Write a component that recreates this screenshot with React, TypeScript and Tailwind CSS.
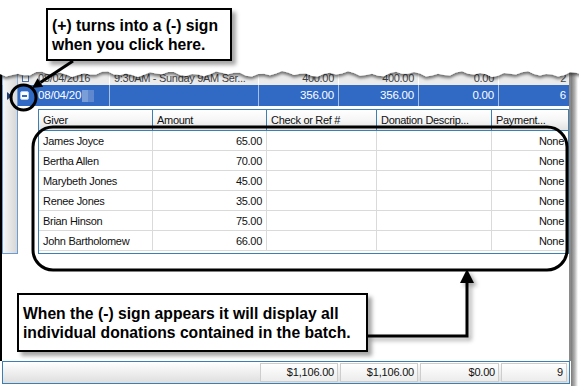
import React from "react";

const gridRows: [string, string][] = [
  ["James Joyce", "65.00"],
  ["Bertha Allen", "70.00"],
  ["Marybeth Jones", "45.00"],
  ["Renee Jones", "35.00"],
  ["Brian Hinson", "75.00"],
  ["John Bartholomew", "66.00"],
];

function RowHeaderCol() {
  return (
    <div className="w-[16px] flex flex-col shrink-0">
      <div className="h-[15px] border-x border-[#8fb1d8] bg-gradient-to-r from-[#f6f6f6] to-[#dadada]" />
      <div className="h-[21px] border-x border-[#6b9bd1] bg-gradient-to-r from-[#f6f6f6] to-[#dadada] flex items-center pl-[4px]">
        <svg width="5" height="8" viewBox="0 0 5 8">
          <polygon points="0,0 5,4 0,8" fill="#1f3f7a" />
        </svg>
      </div>
      <div className="h-[148px] border-x border-b border-[#6b9bd1] bg-gradient-to-r from-[#f6f6f6] to-[#d6d6d6]" />
    </div>
  );
}

function TornRow() {
  return (
    <div className="h-[15px] flex bg-[#ebebeb] text-[#444] text-[11px] tracking-[-0.3px] leading-[13px]">
      <div className="w-[92px] border-r border-white flex items-end pl-[4px] gap-[9px]">
        <div className="w-[7px] h-[7px] mb-[3px] border border-[#4a6fa5] bg-white" />
        <span>08/04/2016</span>
      </div>
      <div className="w-[149px] border-r border-white flex items-end pl-[4px]">
        <span className="whitespace-nowrap overflow-hidden">9:30AM - Sunday 9AM Ser...</span>
      </div>
      <div className="w-[80px] border-r border-white flex items-end justify-end pr-[4px]">400.00</div>
      <div className="w-[80px] border-r border-white flex items-end justify-end pr-[4px]">400.00</div>
      <div className="w-[80px] border-r border-white flex items-end justify-end pr-[4px]">0.00</div>
      <div className="w-[70px] flex items-end justify-end pr-[3px]">2</div>
    </div>
  );
}

function SelectedRow() {
  return (
    <div className="h-[21px] flex bg-[#316ac5] text-white text-[11.5px] tracking-[-0.2px] items-stretch">
      <div className="w-[92px] border-r border-[#a9c0e6] flex items-center pl-[2px]">
        <div className="w-[9px] h-[9px] rounded-[2px] bg-white border border-[#b8cdee] flex items-center justify-center">
          <div className="w-[5px] h-[2px] bg-[#316ac5]" />
        </div>
        <span className="ml-[9px]">08/04/20</span>
        <div className="ml-[1px] flex">
          <div className="w-[6px] h-[12px] bg-[#7a9fd8]" />
          <div className="w-[6px] h-[12px] bg-[#5f88cf]" />
        </div>
      </div>
      <div className="w-[149px] border-r border-[#a9c0e6]" />
      <div className="w-[80px] border-r border-[#a9c0e6] flex items-center justify-end pr-[4px]">356.00</div>
      <div className="w-[80px] border-r border-[#a9c0e6] flex items-center justify-end pr-[4px]">356.00</div>
      <div className="w-[80px] border-r border-[#a9c0e6] flex items-center justify-end pr-[4px]">0.00</div>
      <div className="w-[70px] flex items-center justify-end pr-[3px]">6</div>
    </div>
  );
}

function DetailGrid() {
  const hdr = "border-r border-[#3c7fb1] flex items-center pl-[4px] whitespace-nowrap";
  const cell = "border-r border-[#dadada] flex items-center pt-[1px]";
  return (
    <div className="w-[531px] border border-[#3c7fb1] flex flex-col text-[11px] tracking-[-0.3px] text-[#111]">
      <div className="h-[21px] flex border-b border-[#3c7fb1] bg-gradient-to-b from-white via-[#f6f6f6] to-[#e2e2e2]">
        <div className={`w-[114px] ${hdr}`}>Giver</div>
        <div className={`w-[114px] ${hdr}`}>Amount</div>
        <div className={`w-[110px] ${hdr}`}>Check or Ref #</div>
        <div className={`w-[115px] ${hdr}`}>Donation Descrip...</div>
        <div className="w-[76px] flex items-center pl-[4px]">Payment...</div>
      </div>
      {gridRows.map(([name, amt]) => (
        <div key={name} className="h-[20px] flex border-b border-[#dadada] bg-white">
          <div className={`w-[114px] ${cell} pl-[4px]`}>{name}</div>
          <div className={`w-[114px] ${cell} justify-end pr-[4px]`}>{amt}</div>
          <div className={`w-[110px] ${cell}`} />
          <div className={`w-[115px] ${cell}`} />
          <div className="w-[76px] flex items-center justify-end pr-[4px] pt-[1px]">None</div>
        </div>
      ))}
    </div>
  );
}

function Footer() {
  const c =
    "h-[19px] border border-[#cdcdcd] bg-gradient-to-b from-white to-[#ececec] flex items-center justify-end pr-[3px]";
  return (
    <div className="ml-[2px] w-[568px] h-[23px] border border-[#3c7fb1] bg-gradient-to-b from-white to-[#dedede] flex items-center justify-end pr-[2px] gap-[2px] text-[11px] tracking-[-0.2px] text-[#111]">
      <div className={`w-[78px] ${c}`}>$1,106.00</div>
      <div className={`w-[78px] ${c}`}>$1,106.00</div>
      <div className={`w-[79px] ${c}`}>$0.00</div>
      <div className={`w-[66px] ${c}`}>9</div>
    </div>
  );
}

export default function App() {
  const jag = Array.from({ length: 100 }, (_, i) => {
    const x = i * 6;
    const y = 14 + Math.sin(i * 1.7) * 1.6 + Math.sin(i * 0.63) * 1.4;
    return `${x},${y.toFixed(1)}`;
  }).join(" ");

  return (
    <div className="relative w-[579px] h-[386px] overflow-hidden bg-white font-['Liberation_Sans',Arial,sans-serif]">
      <div className="flex flex-col">
        <div className="h-[70px]" />
        <div className="flex h-[316px]">
          <div className="w-[571px] flex flex-col">
            <div className="h-[291px] flex flex-col border-l-2 border-black border-r-2 border-r-[#8a8a8a]">
              <div className="flex">
                <RowHeaderCol />
                <div className="w-[551px] flex flex-col">
                  <TornRow />
                  <SelectedRow />
                  <div className="h-[148px] flex pt-[3px]">
                    <div className="w-[20px]" />
                    <DetailGrid />
                  </div>
                </div>
              </div>
            </div>
            <Footer />
          </div>
          <div className="w-[7px] bg-gradient-to-r from-[#7a7a7a] via-[#b0b0b0] to-white" />
        </div>
      </div>

      {/* torn edge */}
      <svg className="absolute left-0 top-[60px] pointer-events-none" width="579" height="24">
        <defs>
          <filter id="tearShadow" x="-5%" y="-50%" width="110%" height="200%">
            <feDropShadow dx="0" dy="2.5" stdDeviation="1.8" floodColor="#000" floodOpacity="0.55" />
          </filter>
        </defs>
        <polygon points={`0,0 ${jag} 579,0`} fill="#fff" filter="url(#tearShadow)" />
      </svg>

      {/* callout boxes */}
      <div className="absolute left-[46px] top-[8px] w-[186px] h-[53px] border-2 border-black bg-white shadow-[4px_4px_4px_rgba(0,0,0,0.35)] pl-[4px] pt-[6px] text-[15.7px] leading-[19px] font-bold text-black whitespace-nowrap">
        <div>(+) turns into a (-) sign</div>
        <div>when you click here.</div>
      </div>
      <div className="absolute left-[17px] top-[293px] w-[351px] h-[59px] border-2 border-black bg-white shadow-[4px_4px_4px_rgba(0,0,0,0.35)] pl-[4px] pt-[9px] text-[15.7px] leading-[19px] font-bold text-black whitespace-nowrap">
        <div>When the (-) sign appears it will display all</div>
        <div>individual donations contained in the batch.</div>
      </div>

      {/* annotation strokes */}
      <svg className="absolute inset-0 pointer-events-none" width="579" height="386">
        <defs>
          <filter id="arrowShadow" x="-20%" y="-20%" width="140%" height="140%">
            <feDropShadow dx="3" dy="3" stdDeviation="2" floodColor="#000" floodOpacity="0.35" />
          </filter>
        </defs>
        <line x1="73" y1="61" x2="40.4" y2="82.5" stroke="#000" strokeWidth="3" />
        <polygon points="32,88 43.2,86.7 37.6,78.3" fill="#000" />
        <circle cx="23.5" cy="97.5" r="12.5" fill="none" stroke="#000" strokeWidth="3" />
        <rect x="33" y="127" width="534" height="143" rx="20" ry="20" fill="none" stroke="#000" strokeWidth="3" />
        <g filter="url(#arrowShadow)">
          <path d="M 368 336 H 467 V 281" fill="none" stroke="#000" strokeWidth="3" />
          <polygon points="467,269 460,283 474,283" fill="#000" />
        </g>
      </svg>
    </div>
  );
}
